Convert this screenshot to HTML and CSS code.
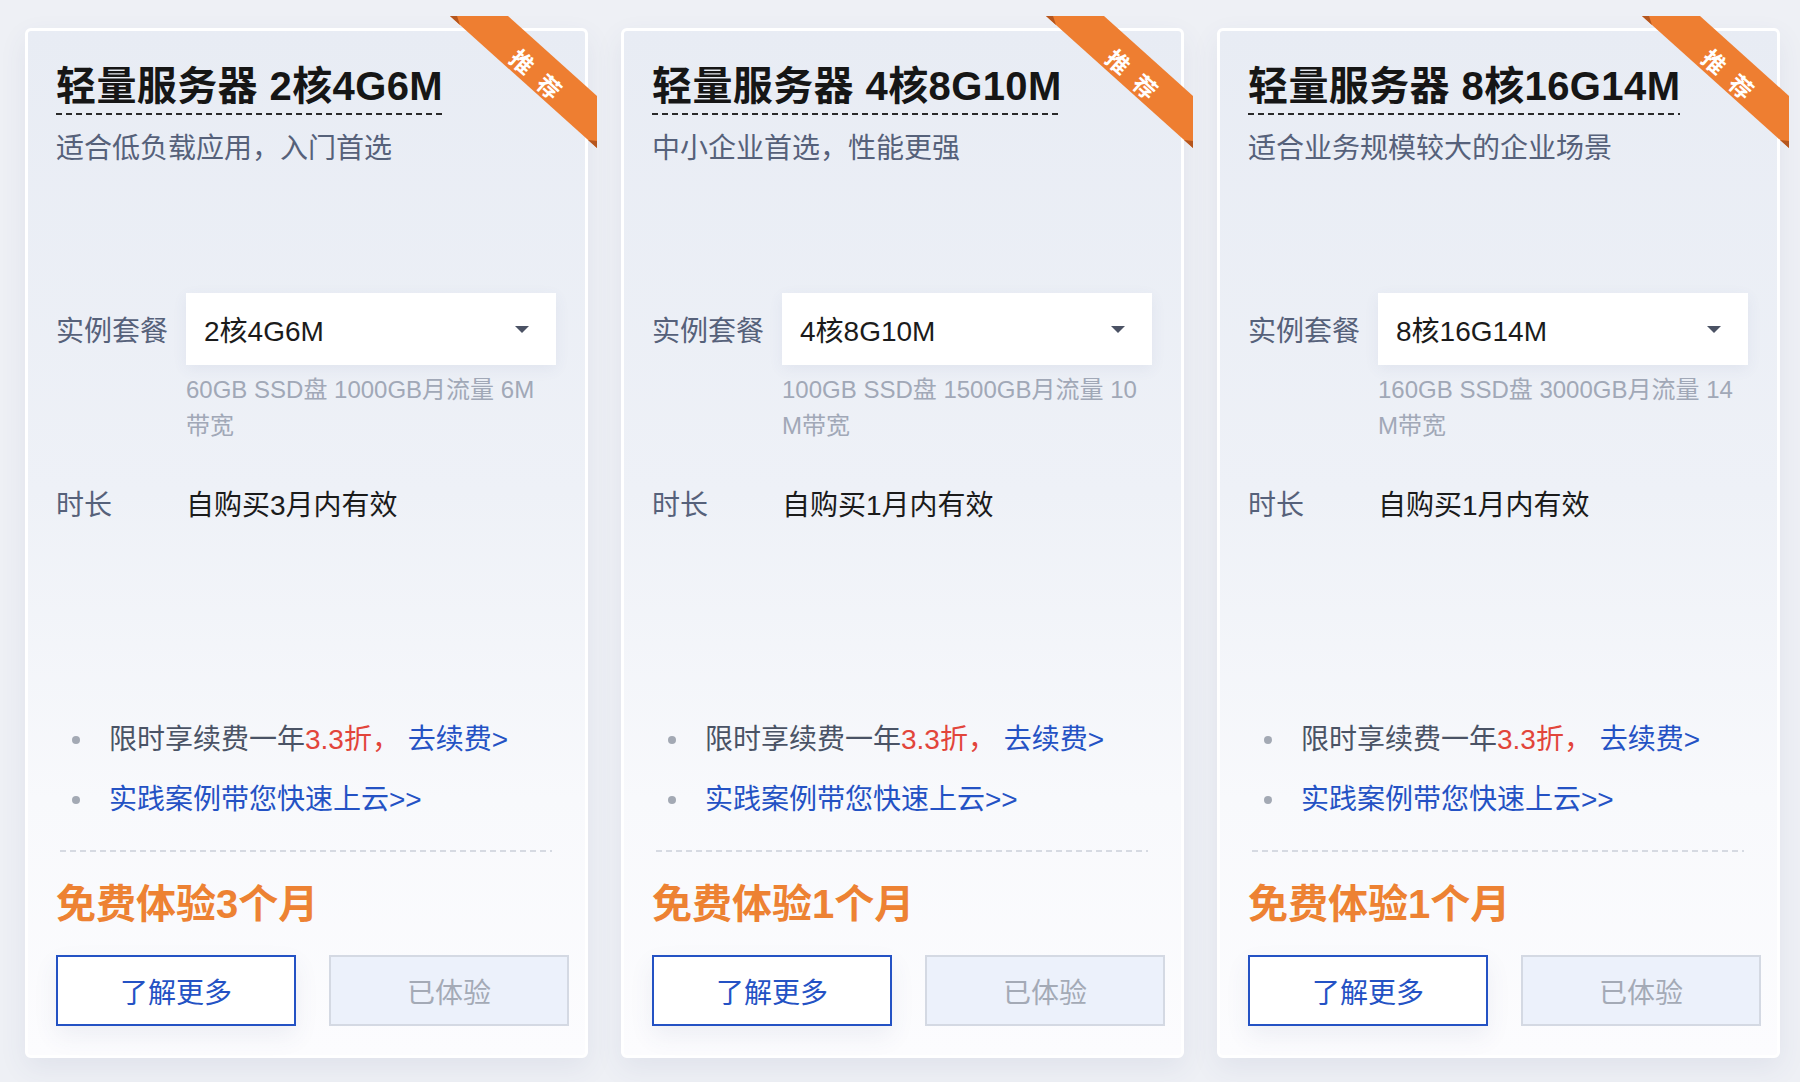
FILE: index.html
```html
<!DOCTYPE html>
<html lang="zh-CN">
<head>
<meta charset="utf-8">
<title>轻量服务器</title>
<link rel="stylesheet" href="styles.css">
</head>
<body>
<div class="page">

  <div class="card">
    <svg class="ribbon" width="148" height="132" viewBox="0 0 148 132">
      <polygon points="0,0 58,0 147,80 147,132" fill="#ee7e31"/>
      <polygon points="0,0 7,0 10,9" fill="#b5561e"/>
      <polygon points="138,124 147,125 147,132" fill="#b5561e"/>
      <text x="73" y="45" transform="rotate(42 73 45)" class="ribbon-text">推</text>
      <text x="100" y="70" transform="rotate(42 100 70)" class="ribbon-text">荐</text>
    </svg>
    <div class="title">轻量服务器 2核4G6M</div>
    <div class="desc">适合低负载应用，入门首选</div>
    <div class="row row-plan">
      <span class="label">实例套餐</span>
      <div class="select"><span class="select-value">2核4G6M</span><i class="caret"></i></div>
    </div>
    <div class="spec">60GB SSD盘 1000GB月流量 6M带宽</div>
    <div class="row row-dur">
      <span class="label">时长</span>
      <span class="value">自购买3月内有效</span>
    </div>
    <ul class="perks">
      <li>限时享续费一年<em class="hot">3.3折，</em> <a class="link">去续费&gt;</a></li>
      <li><a class="link">实践案例带您快速上云&gt;&gt;</a></li>
    </ul>
    <div class="divider"></div>
    <div class="free">免费体验3个月</div>
    <div class="actions">
      <button class="btn btn-primary">了解更多</button>
      <button class="btn btn-done">已体验</button>
    </div>
  </div>

  <div class="card">
    <svg class="ribbon" width="148" height="132" viewBox="0 0 148 132">
      <polygon points="0,0 58,0 147,80 147,132" fill="#ee7e31"/>
      <polygon points="0,0 7,0 10,9" fill="#b5561e"/>
      <polygon points="138,124 147,125 147,132" fill="#b5561e"/>
      <text x="73" y="45" transform="rotate(42 73 45)" class="ribbon-text">推</text>
      <text x="100" y="70" transform="rotate(42 100 70)" class="ribbon-text">荐</text>
    </svg>
    <div class="title">轻量服务器 4核8G10M</div>
    <div class="desc">中小企业首选，性能更强</div>
    <div class="row row-plan">
      <span class="label">实例套餐</span>
      <div class="select"><span class="select-value">4核8G10M</span><i class="caret"></i></div>
    </div>
    <div class="spec">100GB SSD盘 1500GB月流量 10M带宽</div>
    <div class="row row-dur">
      <span class="label">时长</span>
      <span class="value">自购买1月内有效</span>
    </div>
    <ul class="perks">
      <li>限时享续费一年<em class="hot">3.3折，</em> <a class="link">去续费&gt;</a></li>
      <li><a class="link">实践案例带您快速上云&gt;&gt;</a></li>
    </ul>
    <div class="divider"></div>
    <div class="free">免费体验1个月</div>
    <div class="actions">
      <button class="btn btn-primary">了解更多</button>
      <button class="btn btn-done">已体验</button>
    </div>
  </div>

  <div class="card">
    <svg class="ribbon" width="148" height="132" viewBox="0 0 148 132">
      <polygon points="0,0 58,0 147,80 147,132" fill="#ee7e31"/>
      <polygon points="0,0 7,0 10,9" fill="#b5561e"/>
      <polygon points="138,124 147,125 147,132" fill="#b5561e"/>
      <text x="73" y="45" transform="rotate(42 73 45)" class="ribbon-text">推</text>
      <text x="100" y="70" transform="rotate(42 100 70)" class="ribbon-text">荐</text>
    </svg>
    <div class="title">轻量服务器 8核16G14M</div>
    <div class="desc">适合业务规模较大的企业场景</div>
    <div class="row row-plan">
      <span class="label">实例套餐</span>
      <div class="select"><span class="select-value">8核16G14M</span><i class="caret"></i></div>
    </div>
    <div class="spec">160GB SSD盘 3000GB月流量 14M带宽</div>
    <div class="row row-dur">
      <span class="label">时长</span>
      <span class="value">自购买1月内有效</span>
    </div>
    <ul class="perks">
      <li>限时享续费一年<em class="hot">3.3折，</em> <a class="link">去续费&gt;</a></li>
      <li><a class="link">实践案例带您快速上云&gt;&gt;</a></li>
    </ul>
    <div class="divider"></div>
    <div class="free">免费体验1个月</div>
    <div class="actions">
      <button class="btn btn-primary">了解更多</button>
      <button class="btn btn-done">已体验</button>
    </div>
  </div>

</div>
</body>
</html>
```

FILE: styles.css
```css
* {
  box-sizing: border-box;
}

html, body {
  margin: 0;
  padding: 0;
}

body {
  background: #eef0f5;
  font-family: "Liberation Sans", "Noto Sans CJK SC", sans-serif;
  color: #1a1a1a;
  width: 1800px;
  height: 1082px;
  overflow: hidden;
}

.page {
  display: flex;
  gap: 33px;
  padding: 28px 0 0 25px;
}

.card {
  position: relative;
  width: 563px;
  height: 1030px;
  border: 3px solid #ffffff;
  border-radius: 6px;
  background: linear-gradient(180deg, #e8ecf4 0%, #eef1f7 45%, #f8f9fc 75%, #fcfcfe 100%);
  box-shadow: 0 10px 28px rgba(60, 80, 130, 0.08);
  display: flex;
  flex-direction: column;
  align-items: flex-start;
  padding: 31px 18px 28px 28px;
}

.ribbon {
  position: absolute;
  left: 422px;
  top: -15px;
  overflow: visible;
}

.ribbon-text {
  font-family: "Noto Sans CJK SC", sans-serif;
  font-size: 23px;
  font-weight: 700;
  fill: #ffffff;
  text-anchor: middle;
  dominant-baseline: central;
}

.title {
  font-size: 40px;
  line-height: 48px;
  font-weight: 700;
  letter-spacing: 0.4px;
  color: #161616;
  padding-bottom: 5px;
  background-image: repeating-linear-gradient(90deg, #2a2a2a 0 6px, transparent 6px 10px);
  background-size: 100% 2px;
  background-position: left bottom;
  background-repeat: no-repeat;
  white-space: nowrap;
}

.desc {
  margin-top: 14px;
  font-size: 28px;
  line-height: 40px;
  color: #56617a;
}

.row {
  display: flex;
  align-items: center;
}

.label {
  width: 130px;
  flex: none;
  font-size: 28px;
  color: #56617a;
}

.row-plan {
  margin-top: 124px;
  height: 72px;
}

.select {
  width: 370px;
  height: 72px;
  background: #ffffff;
  box-shadow: 0 4px 14px rgba(70, 90, 140, 0.07);
  display: flex;
  align-items: center;
  justify-content: space-between;
  padding: 0 27px 0 18px;
}

.select-value {
  font-size: 28px;
  color: #1b1b1b;
}

.caret {
  width: 0;
  height: 0;
  border-left: 7px solid transparent;
  border-right: 7px solid transparent;
  border-top: 7px solid #4b5264;
}

.spec {
  margin-top: 7px;
  margin-left: 130px;
  width: 370px;
  font-size: 24px;
  line-height: 36px;
  color: #a1a8b7;
  word-break: break-all;
}

.row-dur {
  margin-top: 39px;
  height: 40px;
}

.value {
  font-size: 28px;
  color: #1b1b1b;
}

.perks {
  list-style: none;
  margin: 197px 0 0 0;
  padding: 0;
}

.perks li {
  position: relative;
  padding-left: 53px;
  font-size: 28px;
  line-height: 40px;
  color: #4a5365;
  white-space: nowrap;
}

.perks li + li {
  margin-top: 20px;
}

.perks li::before {
  content: "";
  position: absolute;
  left: 16px;
  top: 16px;
  width: 8px;
  height: 8px;
  border-radius: 50%;
  background: #a3a9b4;
}

.hot {
  font-style: normal;
  color: #e2453b;
}

.link {
  color: #2452c4;
  text-decoration: none;
}

.divider {
  margin-top: 30px;
  margin-left: 4px;
  width: 492px;
  height: 2px;
  background-image: repeating-linear-gradient(90deg, #d6dae2 0 6px, transparent 6px 10px);
}

.free {
  margin-top: 28px;
  font-size: 40px;
  line-height: 48px;
  font-weight: 700;
  color: #ed8233;
}

.actions {
  margin-top: 27px;
  display: flex;
  gap: 33px;
}

.btn {
  width: 240px;
  height: 71px;
  font-family: "Liberation Sans", "Noto Sans CJK SC", sans-serif;
  font-size: 28px;
  padding: 0;
  border-radius: 0;
  cursor: pointer;
}

.btn-primary {
  background: #ffffff;
  border: 2px solid #2452c4;
  color: #2452c4;
  box-shadow: 0 10px 24px rgba(60, 80, 130, 0.08);
}

.btn-done {
  background: #ecf1fb;
  border: 2px solid #d4d9e3;
  color: #a4aab6;
}
```
